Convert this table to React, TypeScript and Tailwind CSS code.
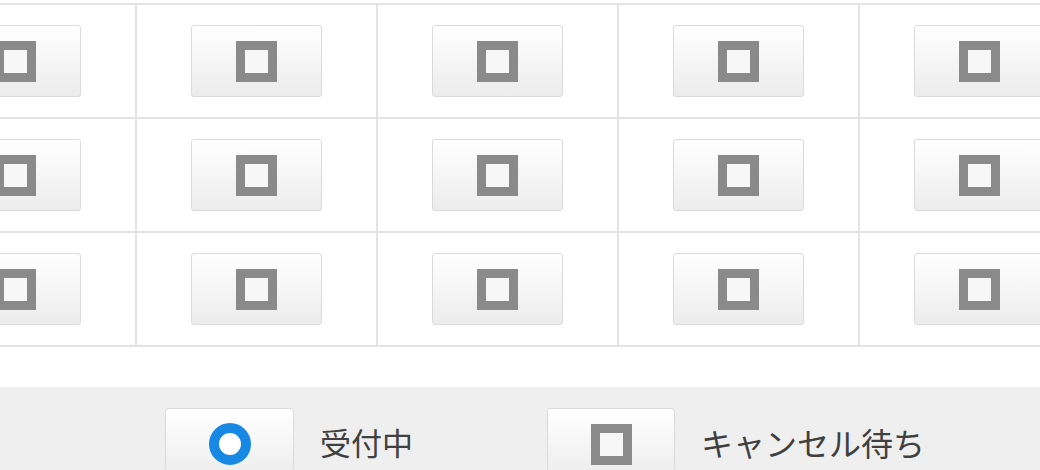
import React from 'react';

const COLS = 5;
const ROWS = 3;

const SquareMark = () => (
  <span className="block w-[41px] h-[41px] border-[9px] border-[#8a8a8a] bg-[#f7f7f7]" />
);

const CircleMark = () => (
  <span className="block w-[42px] h-[42px] rounded-full border-[10px] border-[#1788e4] bg-white" />
);

const SlotButton: React.FC<{ children: React.ReactNode; className?: string }> = ({ children, className }) => (
  <button
    className={`flex items-center justify-center h-[72px] rounded-[3px] border border-[#dadada] bg-gradient-to-b from-white to-[#ececec] ${className ?? ''}`}
  >
    {children}
  </button>
);

export default function App() {
  return (
    <div className="w-[1040px] h-[470px] overflow-hidden bg-white font-['Noto_Sans_CJK_JP',sans-serif] text-[#404040]">
      <div className="pt-[3px] h-[387px]">
        <div className="ml-[-104px] w-[1210px] border-t-2 border-[#e3e3e3]">
          {Array.from({ length: ROWS }).map((_, r) => (
            <div key={r} className="flex">
              {Array.from({ length: COLS }).map((_, c) => (
                <div
                  key={c}
                  className="flex items-center justify-center w-[241px] h-[114px] shrink-0 border-r-2 border-b-2 border-[#e3e3e3]"
                >
                  <SlotButton className="w-[131px]">
                    <SquareMark />
                  </SlotButton>
                </div>
              ))}
            </div>
          ))}
        </div>
      </div>
      <div className="h-[83px] bg-[#efefef] pt-[21px] pl-[165px] flex items-start">
        <SlotButton className="w-[129px]">
          <CircleMark />
        </SlotButton>
        <span className="w-[95px] ml-[26px] mt-[14px] text-[31px] leading-[40px] whitespace-nowrap">受付中</span>
        <SlotButton className="ml-[132px] w-[128px]">
          <SquareMark />
        </SlotButton>
        <span className="ml-[26px] mt-[14px] text-[32px] leading-[40px] whitespace-nowrap">キャンセル待ち</span>
      </div>
    </div>
  );
}
